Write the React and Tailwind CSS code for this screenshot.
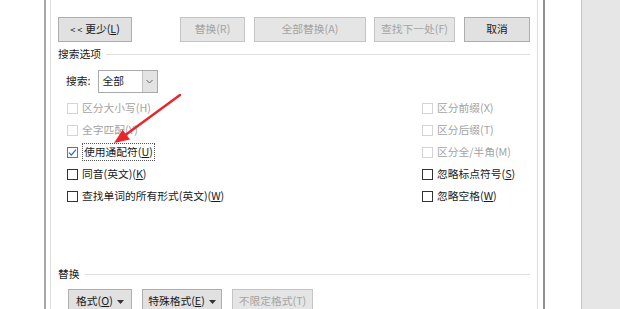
import React from "react";

const font = { fontFamily: '"Noto Sans CJK SC", "Noto Sans", sans-serif' };

function Btn({ w, disabled, children, className = "" }) {
  return (
    <div
      className={`h-[25px] ${w} flex items-center justify-center border text-[10.75px] leading-none ${
        disabled
          ? "bg-[#e5e5e5] border-[#c4c4c4] text-[#a3a3a3]"
          : "bg-[#e1e1e1] border-[#adadad] text-[#1a1a1a]"
      } ${className}`}
    >
      {children}
    </div>
  );
}

function Caret() {
  return (
    <svg className="ml-[4px]" width="7" height="4" viewBox="0 0 7 4">
      <path d="M0 0 L7 0 L3.5 4 Z" fill="#333" />
    </svg>
  );
}

function Box({ state }) {
  if (state === "checked") {
    return (
      <div className="w-[11px] h-[11px] border border-[#3b7ac9] bg-white flex items-center justify-center">
        <svg width="9" height="9" viewBox="0 0 9 9">
          <path d="M1 4.6 L3.4 7 L8 1.6" fill="none" stroke="#2a6bc7" strokeWidth="1.2" />
        </svg>
      </div>
    );
  }
  return (
    <div
      className={`w-[11px] h-[11px] border bg-white ${
        state === "disabled" ? "border-[#d4d4d4]" : "border-[#333333]"
      }`}
    />
  );
}

function Row({ state, children, focus }) {
  return (
    <div className="h-[22px] flex items-center">
      <Box state={state} />
      <span
        className={`ml-[4px] text-[10.75px] leading-none ${
          state === "disabled" ? "text-[#a3a3a3]" : "text-[#1a1a1a]"
        } ${focus ? "border border-dotted border-[#555] px-[1px] py-[3px] -ml-[1px]" : ""}`}
      >
        {children}
      </span>
    </div>
  );
}

function Section({ label }) {
  return (
    <div className="h-[14px] flex items-center">
      <span className="text-[10.75px] leading-none text-[#1a1a1a]">{label}</span>
      <div className="flex-1 h-px bg-[#dedede] ml-[5px]" />
    </div>
  );
}

export default function App() {
  return (
    <div className="w-[620px] h-[309px] flex bg-white overflow-hidden" style={font}>
      <div className="w-[44px] bg-white" />
      <div className="w-[2px] bg-[#a8a8a8]" />
      <div className="w-[4px] bg-white" />
      <div className="w-px bg-[#dcdcdc]" />

      <div className="relative w-[486px] bg-white pl-[7px] pr-[7px] pt-[17px]">
        <div className="flex">
          <Btn w="w-[74px]">
            <span className="text-[9px] mr-[3px]">{"< <"}</span>更少(<u>L</u>)
          </Btn>
          <Btn w="w-[65px]" disabled className="ml-[48px]">替换(R)</Btn>
          <Btn w="w-[112px]" disabled className="ml-[9px]">全部替换(A)</Btn>
          <Btn w="w-[81px]" disabled className="ml-[8px]">查找下一处(F)</Btn>
          <Btn w="w-[66px]" className="ml-[9px]">取消</Btn>
        </div>

        <div className="mt-[5px]">
          <Section label="搜索选项" />
        </div>

        <div className="mt-[9px] flex items-center pl-[8px]">
          <span className="text-[10.75px] leading-none text-[#1a1a1a]">搜索:</span>
          <div className="ml-[7px] w-[60px] h-[23px] border border-[#a9a9a9] flex bg-white">
            <div className="flex-1 flex items-center pl-[4px] text-[10.75px] leading-none text-[#1a1a1a]">全部</div>
            <div className="w-[15px] bg-[#e3e3e3] border-l border-[#c2c2c2] flex items-center justify-center">
              <svg width="7" height="5" viewBox="0 0 7 5">
                <path d="M0.5 1 L3.5 4 L6.5 1" fill="none" stroke="#555" strokeWidth="0.9" />
              </svg>
            </div>
          </div>
        </div>

        <div className="mt-[4px] flex pl-[9px]">
          <div className="w-[355px]">
            <Row state="disabled">区分大小写(H)</Row>
            <Row state="disabled">全字匹配(Y)</Row>
            <Row state="checked" focus>
              使用通配符(<u>U</u>)
            </Row>
            <Row>
              同音(英文)(<u>K</u>)
            </Row>
            <Row>
              查找单词的所有形式(英文)(<u>W</u>)
            </Row>
          </div>
          <div>
            <Row state="disabled">区分前缀(X)</Row>
            <Row state="disabled">区分后缀(T)</Row>
            <Row state="disabled">区分全/半角(M)</Row>
            <Row>
              忽略标点符号(<u>S</u>)
            </Row>
            <Row>
              忽略空格(<u>W</u>)
            </Row>
          </div>
        </div>

        <div className="mt-[60px]">
          <Section label="替换" />
        </div>

        <div className="mt-[8px] flex pl-[10px]">
          <Btn w="w-[64px]">
            格式(<u>O</u>)
            <Caret />
          </Btn>
          <Btn w="w-[80px]" className="ml-[10px]">
            特殊格式(<u>E</u>)
            <Caret />
          </Btn>
          <Btn w="w-[81px]" disabled className="ml-[10px]">不限定格式(T)</Btn>
        </div>

        <svg
          className="absolute left-0 top-0 pointer-events-none"
          width="486"
          height="309"
          viewBox="51 0 486 309"
        >
          <line x1="180" y1="95" x2="124" y2="136" stroke="#e8262a" strokeWidth="2.4" strokeLinecap="round" />
          <polygon points="114,143 122.6,129.8 130,139.6" fill="#e8262a" />
        </svg>
      </div>

      <div className="w-px bg-[#dcdcdc]" />
      <div className="w-[5px] bg-white" />
      <div className="w-[2px] bg-[#8f8f8f]" />
      <div className="w-[36px] bg-white" />
      <div className="w-px bg-[#c4c4c4]" />
      <div className="flex-1 bg-[#e6e6e6]" />
    </div>
  );
}
